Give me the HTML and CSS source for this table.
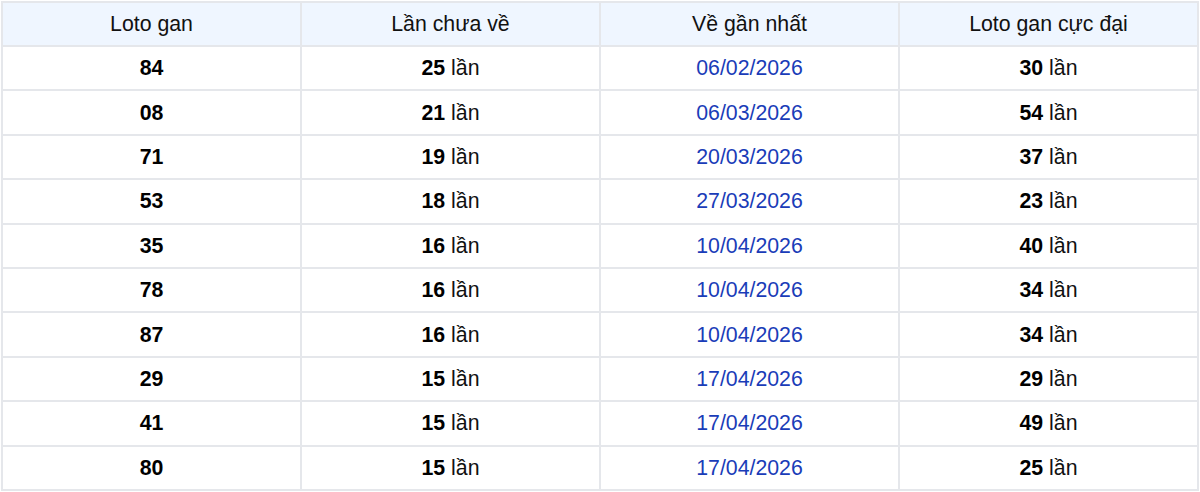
FILE: index.html
```html
<!DOCTYPE html>
<html lang="vi">
<head>
<meta charset="utf-8">
<link rel="stylesheet" href="styles.css">
</head>
<body>
<table class="gan">
<thead>
<tr><th>Loto gan</th><th>Lần chưa về</th><th>Về gần nhất</th><th>Loto gan cực đại</th></tr>
</thead>
<tbody>
<tr><td><b>84</b></td><td><b>25</b> lần</td><td class="date">06/02/2026</td><td><b>30</b> lần</td></tr>
<tr><td><b>08</b></td><td><b>21</b> lần</td><td class="date">06/03/2026</td><td><b>54</b> lần</td></tr>
<tr><td><b>71</b></td><td><b>19</b> lần</td><td class="date">20/03/2026</td><td><b>37</b> lần</td></tr>
<tr><td><b>53</b></td><td><b>18</b> lần</td><td class="date">27/03/2026</td><td><b>23</b> lần</td></tr>
<tr><td><b>35</b></td><td><b>16</b> lần</td><td class="date">10/04/2026</td><td><b>40</b> lần</td></tr>
<tr><td><b>78</b></td><td><b>16</b> lần</td><td class="date">10/04/2026</td><td><b>34</b> lần</td></tr>
<tr><td><b>87</b></td><td><b>16</b> lần</td><td class="date">10/04/2026</td><td><b>34</b> lần</td></tr>
<tr><td><b>29</b></td><td><b>15</b> lần</td><td class="date">17/04/2026</td><td><b>29</b> lần</td></tr>
<tr><td><b>41</b></td><td><b>15</b> lần</td><td class="date">17/04/2026</td><td><b>49</b> lần</td></tr>
<tr><td><b>80</b></td><td><b>15</b> lần</td><td class="date">17/04/2026</td><td><b>25</b> lần</td></tr>
</tbody>
</table>
</body>
</html>
```

FILE: styles.css
```css
html, body {
  margin: 0;
  padding: 0;
  background: #ffffff;
}
body {
  padding: 1px 1px 0 1px;
  font-family: "Liberation Sans", Arial, sans-serif;
  font-size: 21.3px;
  color: #111111;
}
.gan {
  width: 100%;
  border-collapse: collapse;
  table-layout: fixed;
}
.gan th, .gan td {
  border: 2px solid #e5e7eb;
  text-align: center;
  padding: 0 8px;
  line-height: 24px;
}
.gan th {
  height: 42px;
  background: #eff6ff;
  font-weight: normal;
  color: #111111;
}
.gan td {
  height: 42.4px;
}
.gan b {
  font-weight: bold;
  color: #000000;
}
.gan .date {
  color: #1a3cb8;
}
```
